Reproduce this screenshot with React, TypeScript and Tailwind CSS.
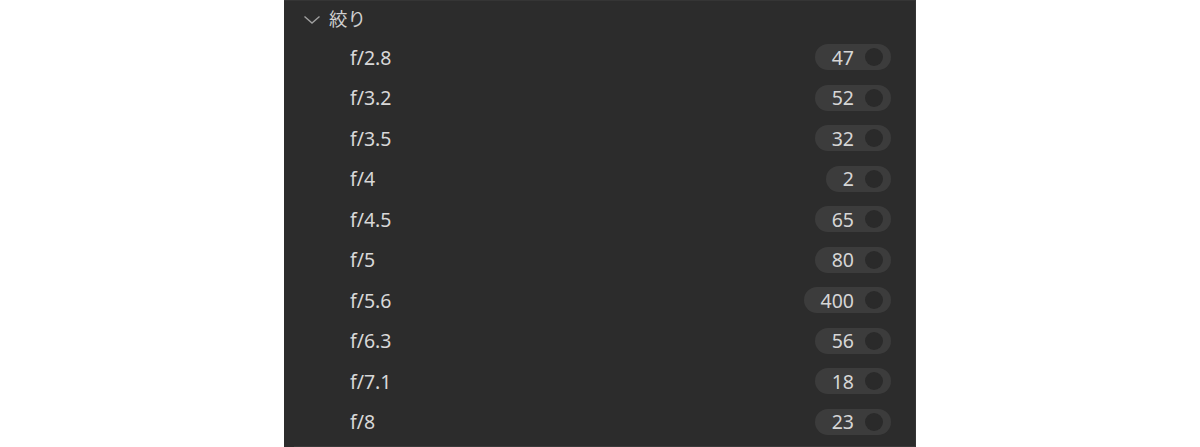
import React from "react";

const apertures = [
  { label: "f/2.8", count: 47 },
  { label: "f/3.2", count: 52 },
  { label: "f/3.5", count: 32 },
  { label: "f/4", count: 2 },
  { label: "f/4.5", count: 65 },
  { label: "f/5", count: 80 },
  { label: "f/5.6", count: 400 },
  { label: "f/6.3", count: 56 },
  { label: "f/7.1", count: 18 },
  { label: "f/8", count: 23 },
];

const font = { fontFamily: '"Noto Sans", "Noto Sans CJK JP", sans-serif' };

function CountToggle({ count }: { count: number }) {
  return (
    <div className="flex h-[26px] items-center rounded-full bg-[#3c3c3c] pl-[17px] pr-[8px]">
      <span className="text-[19.5px] leading-none text-[#d6d6d6]">{count}</span>
      <span className="ml-[11px] h-[18px] w-[18px] rounded-full bg-[#2a2a2a]" />
    </div>
  );
}

export default function App() {
  return (
    <div className="flex h-[447px] w-full justify-center bg-white" style={font}>
      <div className="flex h-[447px] w-[632px] flex-col border-t border-r border-[#353535] bg-[#2c2c2c]">
        {/* Group header */}
        <div className="flex h-[36px] items-center pl-[19px]">
          <svg width="18" height="11" viewBox="0 0 18 11" fill="none" className="mt-[1px]">
            <path d="M1.5 2.5 L9 9 L16.5 2.5" stroke="#a0a0a0" strokeWidth="1.4" />
          </svg>
          <span className="ml-[8px] text-[18.5px] leading-none text-[#d0d0d0]">絞り</span>
        </div>

        {/* Aperture rows */}
        <div className="flex flex-col">
          {apertures.map((a) => (
            <div
              key={a.label}
              className="flex h-[40.5px] items-center justify-between pl-[66px] pr-[24px]"
            >
              <span className="text-[19.5px] leading-none text-[#d8d8d8]">{a.label}</span>
              <CountToggle count={a.count} />
            </div>
          ))}
        </div>
        <div className="mt-auto ml-[10px] h-px bg-[#3a3a3a]" />
      </div>
    </div>
  );
}
